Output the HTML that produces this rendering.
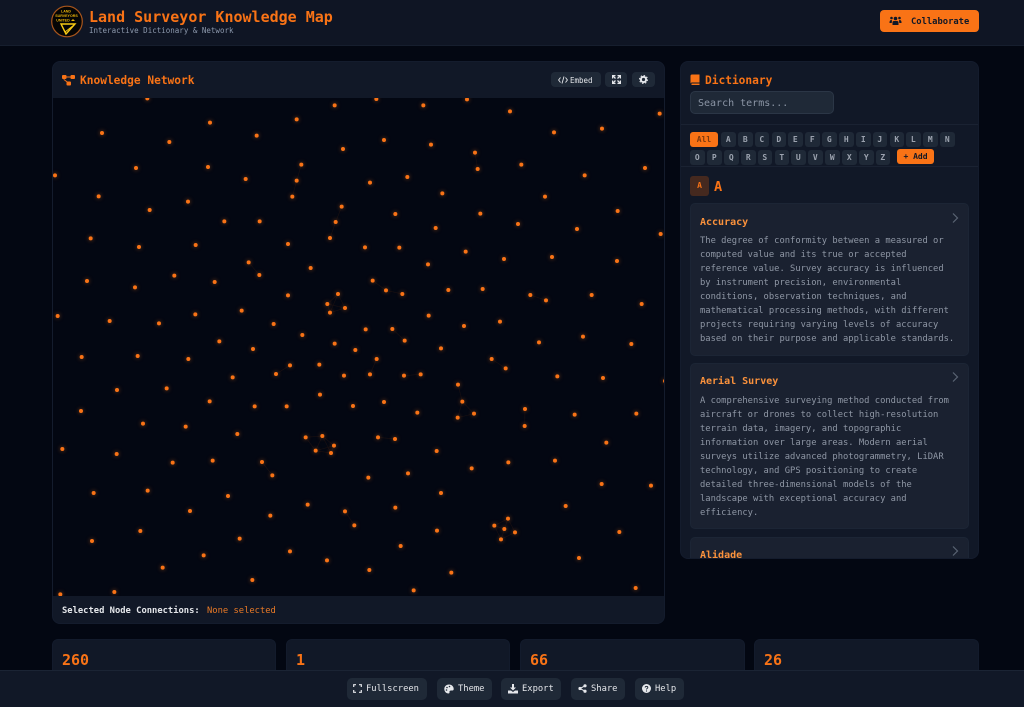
<!DOCTYPE html>
<html lang="en"><head><meta charset="utf-8"><title>Land Surveyor Knowledge Map</title>
<style>
*{box-sizing:border-box;margin:0;padding:0}
html,body{width:1024px;height:707px;overflow:hidden;background:#030712}
body{position:relative;font-family:"DejaVu Sans Mono","Liberation Mono",monospace;color:#e5e7eb}
.a,.b,.l{position:absolute}
.a{white-space:nowrap}
.b{background:#1f2937;border-radius:4px}
.l{background:#1f2937;border-radius:3px;width:14.5px;height:15px;line-height:15px;text-align:center;font-size:8px;font-weight:bold;color:#9ca3af}
.r1{top:132px}.r2{top:150px}
.card{position:absolute;left:9px;width:279px;background:#1a2130;border:1px solid #1c2535;border-radius:5px}
.ct{position:absolute;left:9px;font-size:10px;font-weight:bold;color:#fb923c;line-height:14px;white-space:nowrap}
.cx{position:absolute;left:9px;font-size:8.8px;line-height:14px;color:#8f97a5;white-space:nowrap}
.ch{position:absolute;left:260px}
.s{position:absolute;top:639px;height:60px;background:#111827;border:1px solid #131b2c;border-radius:6px}
.v{position:absolute;left:9px;top:11px;font-size:15px;line-height:18px;font-weight:bold;color:#f97316}
.ft{font-size:8.8px;line-height:22px;color:#e5e7eb}
</style></head><body>

<!-- header -->
<div class="a" style="left:0;top:0;width:1024px;height:46px;background:#0f1524;border-bottom:1px solid #161e2e"></div>
<svg class="a" style="left:50px;top:5px" width="34" height="34" viewBox="0 0 34 34">
<circle cx="17" cy="16.5" r="15.3" fill="#050505" stroke="#a8551c" stroke-width="1.2"/>
<text x="16" y="7.5" font-size="3.6" font-weight="bold" fill="#eab308" text-anchor="middle" font-family="Liberation Sans,sans-serif">LAND</text>
<text x="16.5" y="12" font-size="3.6" font-weight="bold" fill="#eab308" text-anchor="middle" font-family="Liberation Sans,sans-serif">SURVEYORS</text>
<text x="13" y="16.5" font-size="3.6" font-weight="bold" fill="#eab308" text-anchor="middle" font-family="Liberation Sans,sans-serif">UNITED</text>
<path d="M11 19H25L16 29Z" fill="none" stroke="#facc15" stroke-width="1.4"/>
<path d="M15 27L24 20" stroke="#facc15" stroke-width="1"/>
<path d="M21 16l2-2 2 2z" fill="#eab308"/>
</svg>
<div class="a" style="left:89px;top:8px;font-size:15px;line-height:18px;font-weight:bold;color:#f97316">Land Surveyor Knowledge Map</div>
<div class="a" style="left:89px;top:26px;font-size:7.5px;line-height:10px;color:#8d99ad">Interactive Dictionary &amp; Network</div>
<div class="a" style="left:880px;top:10px;width:99px;height:22px;background:#f97316;border-radius:4px"></div>
<svg class="a" style="left:889px;top:15px" width="13" height="12" viewBox="0 0 13 12" fill="#111827">
<circle cx="6.5" cy="3.5" r="1.8"/><circle cx="2.5" cy="3" r="1.3"/><circle cx="10.5" cy="3" r="1.3"/>
<path d="M3.5 10V7.5Q3.5 6 5 6H8Q9.5 6 9.5 7.5V10Z"/><path d="M.5 7.5Q.5 5 2.5 5L3 5.5 2.7 8H.5ZM12.500 7.500Q12.500 5 10.500 5L10 5.500 10.300 8H12.500Z"/>
</svg>
<div class="a" style="left:911px;top:11px;font-size:8.8px;line-height:22px;font-weight:bold;color:#111827">Collaborate</div>

<!-- network panel -->
<div class="a" style="left:52px;top:61px;width:613px;height:563px;background:#111827;border:1px solid #141c2d;border-radius:8px"></div>
<svg class="a" style="left:61px;top:74px" width="15" height="12" viewBox="0 0 15 12" fill="#f97316">
<rect x="1" y="1" width="4.500" height="4" rx="1"/><rect x="9.500" y="1" width="4.500" height="4" rx="1"/><rect x="5.500" y="7.500" width="4.500" height="4" rx="1"/>
<path d="M5 2.500h5v1H5zM3 5l4 3-.6.800-4-3z"/>
</svg>
<div class="a" style="left:80px;top:74px;font-size:11.2px;line-height:14px;font-weight:bold;color:#f97316">Knowledge Network</div>
<div class="b" style="left:551px;top:72px;width:50px;height:15px"></div>
<svg class="a" style="left:558px;top:75.500px" width="10" height="8" viewBox="0 0 10 8"><path d="M2.500 1.500L.6 4L2.500 6.500M7.500 1.500L9.400 4L7.500 6.500M6 .5L4 7.500" fill="none" stroke="#e5e7eb" stroke-width=".9"/></svg>
<div class="a" style="left:570px;top:72.500px;font-size:7.500px;line-height:15px;color:#e5e7eb">Embed</div>
<div class="b" style="left:605px;top:72px;width:22px;height:15px"></div>
<svg class="a" style="left:612px;top:75px" width="9" height="9" viewBox="0 0 9 9"><path d="M.6 3.500V.6H3.500M5.500.6H8.400V3.500M.6 5.500V8.400H3.500M5.500 8.400H8.400V5.500" fill="none" stroke="#e5e7eb" stroke-width="1.200"/><path d="M1 1L3.500 3.500M8 1L5.500 3.500M1 8L3.500 5.500M8 8L5.500 5.500" stroke="#e5e7eb" stroke-width="1.300"/></svg>
<div class="b" style="left:632px;top:72px;width:23px;height:15px"></div>
<svg class="a" style="left:639px;top:75px" width="9" height="9" viewBox="0 0 9 9"><circle cx="4.500" cy="4.500" r="2.600" fill="none" stroke="#e5e7eb" stroke-width="2"/><circle cx="4.500" cy="4.500" r="4" fill="none" stroke="#e5e7eb" stroke-width="1" stroke-dasharray="1.500 1.640"/></svg>

<svg class="a" style="left:53px;top:98px;background:#030712" width="611" height="498" viewBox="0 0 611 498">
<g transform="translate(-3,-3) scale(.33333)">
<path fill="none" stroke="#f97316" stroke-opacity=".09" stroke-width="2" d="M754 209L740 257L727 305M875 335L857 381L840 429M596 502L628 540M864 597L832 627L885 639L840 653L864 597L885 639M832 627L840 653"/>
<path style="filter:drop-shadow(0 0 6px rgba(249,115,22,.55))" fill="none" stroke="#f97316" stroke-width="12" stroke-linecap="round" d="M292 10h0M854 31h0M480 83h0M740 73h0M156 114h0M358 141h0M620 122h0M879 162h0M258 219h0M474 216h0M754 209h0M15 241h0M587 252h0M740 257h0M146 304h0M414 320h0M727 305h0M875 335h0M299 345h0M523 379h0M629 379h0M857 381h0M122 430h0M267 456h0M437 450h0M714 447h0M840 429h0M596 502h0M782 519h0M628 540h0M111 558h0M255 577h0M373 542h0M494 561h0M714 601h0M864 597h0M832 627h0M885 639h0M840 653h0M23 663h0M179 678h0M327 685h0M436 658h0M575 647h0M671 687h0M757 720h0M508 739h0M854 746h0"/>
</g>
<g transform="translate(307,-3) scale(.33333)">
<path fill="none" stroke="#f97316" stroke-opacity=".09" stroke-width="2" d="M345 173L353 222M38 557L78 586L127 597M511 600L558 616M97 702L134 737"/>
<path style="filter:drop-shadow(0 0 6px rgba(249,115,22,.55))" fill="none" stroke="#f97316" stroke-width="12" stroke-linecap="round" d="M49 12h0M321 13h0M190 31h0M450 49h0M899 56h0M582 112h0M726 101h0M72 135h0M213 149h0M345 173h0M353 222h0M484 209h0M855 219h0M674 241h0M142 246h0M30 263h0M247 295h0M555 305h0M106 357h0M361 356h0M773 348h0M474 387h0M651 402h0M227 399h0M902 417h0M15 457h0M118 458h0M317 470h0M432 492h0M576 486h0M771 498h0M204 508h0M38 557h0M78 586h0M127 597h0M265 585h0M368 582h0M511 600h0M558 616h0M695 600h0M845 627h0M206 662h0M312 693h0M420 680h0M669 725h0M17 703h0M97 702h0M134 737h0M537 742h0M814 747h0"/>
</g>
<g transform="translate(-3,247) scale(.33333)">
<path fill="none" stroke="#f97316" stroke-opacity=".09" stroke-width="2" d="M720 61L678 87M767 277L817 273L852 302L843 324L797 317L767 277M817 273L797 317M817 273L843 324M852 302L797 317M636 351L667 391M885 499L913 541"/>
<path style="filter:drop-shadow(0 0 6px rgba(249,115,22,.55))" fill="none" stroke="#f97316" stroke-width="12" stroke-linecap="round" d="M95 36h0M263 33h0M415 42h0M609 12h0M720 61h0M678 87h0M808 59h0M916 15h0M882 92h0M548 97h0M201 135h0M350 130h0M479 169h0M614 184h0M710 184h0M810 149h0M909 183h0M93 198h0M279 236h0M407 245h0M562 267h0M767 277h0M817 273h0M852 302h0M797 317h0M843 324h0M37 312h0M200 327h0M368 353h0M488 347h0M636 351h0M667 391h0M131 444h0M293 437h0M534 453h0M420 498h0M661 512h0M773 479h0M885 499h0M913 541h0M271 558h0M126 588h0M569 581h0M461 631h0M338 668h0M720 619h0M831 646h0M607 705h0M193 741h0M31 748h0"/>
</g>
<g transform="translate(307,247) scale(.33333)">
<path fill="none" stroke="#f97316" stroke-opacity=".09" stroke-width="2" d="M50 42L30 88M132 92L182 88M395 42L437 70M294 119L307 170L342 206L293 218L307 170M495 192L494 243M54 277L105 282M444 521L403 542L423 583L465 562L444 521L423 583M403 542L433 552"/>
<path style="filter:drop-shadow(0 0 6px rgba(249,115,22,.55))" fill="none" stroke="#f97316" stroke-width="12" stroke-linecap="round" d="M243 10h0M50 42h0M395 42h0M437 70h0M30 88h0M132 92h0M182 88h0M592 94h0M729 99h0M915 108h0M294 119h0M72 171h0M307 170h0M172 203h0M342 206h0M293 218h0M495 192h0M494 243h0M644 209h0M829 206h0M54 277h0M105 282h0M739 293h0M230 318h0M445 352h0M585 347h0M335 370h0M144 385h0M25 398h0M725 417h0M873 422h0M243 444h0M617 483h0M106 488h0M444 521h0M403 542h0M433 552h0M465 562h0M423 583h0M231 557h0M778 561h0M122 603h0M657 639h0M28 675h0M274 683h0M161 736h0M827 729h0"/>
</g>
</svg>
<div class="a" style="left:62px;top:604px;font-size:8.800px;line-height:14px;font-weight:bold;color:#e5e7eb">Selected Node Connections:</div>
<div class="a" style="left:207px;top:604px;font-size:8.800px;line-height:14px;color:#ea7a27">None selected</div>

<!-- dictionary -->
<div class="a" style="left:680px;top:61px;width:299px;height:498px;background:#111827;border:1px solid #141c2d;border-radius:8px;overflow:hidden">
 <div style="position:absolute;left:0;top:62px;width:299px;height:1px;background:#1a2232"></div>
 <div style="position:absolute;left:0;top:104px;width:299px;height:1px;background:#1a2232"></div>
 <div class="card" style="top:141px;height:153px">
  <div class="ct" style="top:12px">Accuracy</div>
  <svg class="ch" style="top:8px" width="9" height="12" viewBox="0 0 9 12"><path d="M2 1.500L6.500 6L2 10.500" fill="none" stroke="#5b6474" stroke-width="1.200"/></svg>
  <div class="cx" style="top:30px">The degree of conformity between a measured or<br>computed value and its true or accepted<br>reference value. Survey accuracy is influenced<br>by instrument precision, environmental<br>conditions, observation techniques, and<br>mathematical processing methods, with different<br>projects requiring varying levels of accuracy<br>based on their purpose and applicable standards.</div>
 </div>
 <div class="card" style="top:301px;height:166px">
  <div class="ct" style="top:11px">Aerial Survey</div>
  <svg class="ch" style="top:7px" width="9" height="12" viewBox="0 0 9 12"><path d="M2 1.500L6.500 6L2 10.500" fill="none" stroke="#5b6474" stroke-width="1.200"/></svg>
  <div class="cx" style="top:30px">A comprehensive surveying method conducted from<br>aircraft or drones to collect high-resolution<br>terrain data, imagery, and topographic<br>information over large areas. Modern aerial<br>surveys utilize advanced photogrammetry, LiDAR<br>technology, and GPS positioning to create<br>detailed three-dimensional models of the<br>landscape with exceptional accuracy and<br>efficiency.</div>
 </div>
 <div class="card" style="top:475px;height:60px">
  <div class="ct" style="top:11px">Alidade</div>
  <svg class="ch" style="top:7px" width="9" height="12" viewBox="0 0 9 12"><path d="M2 1.500L6.500 6L2 10.500" fill="none" stroke="#5b6474" stroke-width="1.200"/></svg>
 </div>
</div>
<svg class="a" style="left:690px;top:74px" width="10" height="12" viewBox="0 0 10 12"><path d="M2 .5H9.500V8.500H2Q.5 8.500.5 10V2Q.5.500 2 .5Z" fill="#f97316"/><path d="M1.500 11H9.500V9.500H1.500Z" fill="#f97316"/></svg>
<div class="a" style="left:705px;top:74px;font-size:11.200px;line-height:14px;font-weight:bold;color:#f97316">Dictionary</div>
<div class="a" style="left:690px;top:91px;width:144px;height:23px;background:#1f2937;border:1px solid #2b3646;border-radius:5px"></div>
<div class="a" style="left:698px;top:92px;font-size:10px;line-height:23px;color:#8b95a5">Search terms...</div>

<div class="a" style="left:690px;top:132px;width:28px;height:15px;background:#f97316;border-radius:3px;text-align:center;font-size:8px;line-height:15px;font-weight:bold;color:#7c3a10">All</div>
<div class="l r1" style="left:721px">A</div><div class="l r1" style="left:738px">B</div><div class="l r1" style="left:754.500px">C</div><div class="l r1" style="left:771.500px">D</div><div class="l r1" style="left:788px">E</div><div class="l r1" style="left:805px">F</div><div class="l r1" style="left:822px">G</div><div class="l r1" style="left:839px">H</div><div class="l r1" style="left:856px">I</div><div class="l r1" style="left:872.500px">J</div><div class="l r1" style="left:889.500px">K</div><div class="l r1" style="left:906px">L</div><div class="l r1" style="left:923px">M</div><div class="l r1" style="left:940px">N</div>
<div class="l r2" style="left:690px">O</div><div class="l r2" style="left:707px">P</div><div class="l r2" style="left:724px">Q</div><div class="l r2" style="left:741px">R</div><div class="l r2" style="left:757.500px">S</div><div class="l r2" style="left:774.500px">T</div><div class="l r2" style="left:791px">U</div><div class="l r2" style="left:808px">V</div><div class="l r2" style="left:825px">W</div><div class="l r2" style="left:842px">X</div><div class="l r2" style="left:859px">Y</div><div class="l r2" style="left:875.500px">Z</div>
<div class="a" style="left:897px;top:149px;width:37px;height:15px;background:#f97316;border-radius:3px;text-align:center;font-size:8px;line-height:15px;font-weight:bold;color:#111827">+ Add</div>

<div class="a" style="left:690px;top:176px;width:19px;height:20px;background:#45291f;border-radius:3px;text-align:center;font-size:8px;line-height:20px;font-weight:bold;color:#f97316">A</div>
<div class="a" style="left:714px;top:179px;font-size:13.600px;line-height:16px;font-weight:bold;color:#f97316">A</div>

<!-- stats -->
<div class="s" style="left:52px;width:224px"><div class="v">260</div></div>
<div class="s" style="left:286px;width:224px"><div class="v">1</div></div>
<div class="s" style="left:520px;width:225px"><div class="v">66</div></div>
<div class="s" style="left:754px;width:225px"><div class="v">26</div></div>

<!-- bottom bar -->
<div class="a" style="left:0;top:670px;width:1024px;height:37px;background:#111827;border-top:1px solid #1b2434"></div>
<div class="b" style="left:347px;top:678px;width:80px;height:22px;border-radius:5px"></div>
<svg class="a" style="left:353px;top:684px" width="9" height="9" viewBox="0 0 9 9"><path d="M.7 3V.7H3M6 .7H8.300V3M.7 6V8.300H3M6 8.300H8.300V6" fill="none" stroke="#e5e7eb" stroke-width="1.200"/></svg>
<div class="a ft" style="left:366px;top:678px">Fullscreen</div>
<div class="b" style="left:437px;top:678px;width:55px;height:22px;border-radius:5px"></div>
<svg class="a" style="left:443.500px;top:683.500px" width="10" height="10" viewBox="0 0 10 10"><path d="M5 .5C2.200.5.3 2.500.3 5S2.200 9.500 4.500 9.500C5.800 9.500 5.500 8 5.500 7.500S6 6.500 7 6.500H8.500C9.300 6.500 9.700 5.800 9.700 5C9.700 2.500 7.800.5 5 .5Z" fill="#e5e7eb"/><circle cx="3" cy="3.500" r=".8" fill="#1f2937"/><circle cx="5.500" cy="2.500" r=".8" fill="#1f2937"/><circle cx="2.500" cy="6" r=".8" fill="#1f2937"/></svg>
<div class="a ft" style="left:458px;top:678px">Theme</div>
<div class="b" style="left:501px;top:678px;width:60px;height:22px;border-radius:5px"></div>
<svg class="a" style="left:508px;top:684px" width="10" height="10" viewBox="0 0 10 10" fill="#e5e7eb"><path d="M4 0H6V3.500H8L5 6.500 2 3.500H4Z"/><path d="M0 6.500H3L5 8 7 6.500H10V9.500H0Z"/></svg>
<div class="a ft" style="left:522px;top:678px">Export</div>
<div class="b" style="left:571px;top:678px;width:54px;height:22px;border-radius:5px"></div>
<svg class="a" style="left:578px;top:684px" width="9" height="9" viewBox="0 0 9 9" fill="#e5e7eb"><circle cx="7" cy="1.800" r="1.600"/><circle cx="7" cy="7.200" r="1.600"/><circle cx="2" cy="4.500" r="1.600"/><path d="M2 4.500L7 1.800M2 4.500L7 7.200" stroke="#e5e7eb"/></svg>
<div class="a ft" style="left:591px;top:678px">Share</div>
<div class="b" style="left:635px;top:678px;width:49px;height:22px;border-radius:5px"></div>
<svg class="a" style="left:642px;top:684px" width="9" height="9" viewBox="0 0 9 9"><circle cx="4.500" cy="4.500" r="4.500" fill="#e5e7eb"/><path d="M3.200 3.500C3.200 2 5.800 2 5.800 3.500C5.800 4.500 4.500 4.300 4.500 5.500" fill="none" stroke="#1f2937" stroke-width="1"/><circle cx="4.500" cy="7" r=".6" fill="#1f2937"/></svg>
<div class="a ft" style="left:655px;top:678px">Help</div>
</body></html>
